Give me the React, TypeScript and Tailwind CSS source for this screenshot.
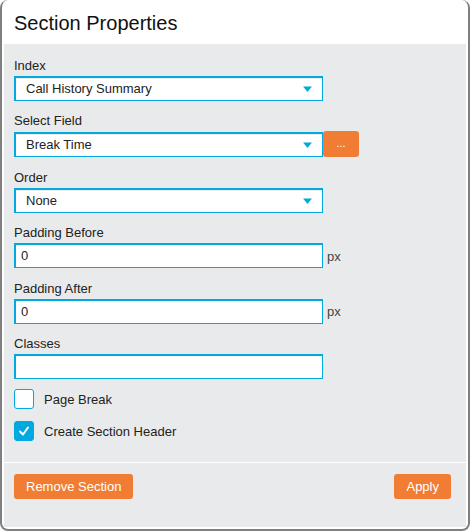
import React from 'react';

const font = { fontFamily: '"Liberation Sans", Arial, sans-serif' };

const Arrow = () => (
  <svg width="9" height="6" viewBox="0 0 9 6" className="absolute right-[10px] top-1/2 -translate-y-1/2">
    <path d="M0 0.5H9L4.5 6Z" fill="#00a9e0" />
  </svg>
);

const Field = ({ label, children }: { label: string; children: React.ReactNode }) => (
  <div className="flex flex-col">
    <div className="h-[20px] leading-[20px] text-[13px] text-[#222]">{label}</div>
    {children}
  </div>
);

const Select = ({ value }: { value: string }) => (
  <div className="relative w-[309px] h-[25px] bg-white border border-[#00a9e0] border-l-2 border-t-2 shadow-[inset_0_1px_1px_rgba(0,0,0,0.08)] flex items-center pl-[10px] text-[13px] text-[#222]">
    {value}
    <Arrow />
  </div>
);

const TextInput = ({ value, suffix }: { value: string; suffix?: boolean }) => (
  <div className="flex items-center gap-[4px]">
    <div className="w-[309px] h-[25px] bg-white border border-[#00a9e0] border-l-2 border-t-2 flex items-center pl-[5px] text-[13px] text-[#222]">
      {value}
    </div>
    {suffix && <span className="text-[13px] text-[#444] mt-[2px]">px</span>}
  </div>
);

const Checkbox = ({ checked, label }: { checked?: boolean; label: string }) => (
  <div className="flex items-center gap-[10px]">
    <div
      className={`w-[20px] h-[20px] rounded-[3px] border border-[#00a9e0] flex items-center justify-center ${
        checked ? 'bg-[#00a9e0]' : 'bg-white'
      }`}
    >
      {checked && (
        <svg width="12" height="12" viewBox="0 0 12 12">
          <path d="M2 6.5L5 9.5L10 2.5" stroke="white" strokeWidth="2" fill="none" strokeLinecap="round" strokeLinejoin="round" />
        </svg>
      )}
    </div>
    <span className="text-[13px] text-[#222]">{label}</span>
  </div>
);

export default function App() {
  return (
    <div style={font} className="w-[470px] h-[531px] bg-white border-2 border-t-0 border-[#7f7f7f] rounded-[8px] px-[2px] pb-[2px] flex flex-col overflow-hidden">
      {/* Header */}
      <div className="h-[44px] flex items-center pl-[10px] pt-[2px] text-[20px] text-[#111]">Section Properties</div>

      {/* Body */}
      <div className="flex-1 bg-[#e9eaec] flex flex-col">
        <div className="pt-[12px] pl-[10px] pb-[21px] flex flex-col gap-[10.4px]">
          <Field label="Index">
            <Select value="Call History Summary" />
          </Field>
          <Field label="Select Field">
            <div className="flex items-center">
              <Select value="Break Time" />
              <button className="w-[36px] h-[26px] bg-[#f07d33] rounded-[3px] text-white text-[11px] leading-none pb-[2px]">
                ...
              </button>
            </div>
          </Field>
          <Field label="Order">
            <Select value="None" />
          </Field>
          <Field label="Padding Before">
            <TextInput value="0" suffix />
          </Field>
          <Field label="Padding After">
            <TextInput value="0" suffix />
          </Field>
          <Field label="Classes">
            <TextInput value="" />
          </Field>
          <div className="flex flex-col gap-[12px]">
            <Checkbox label="Page Break" />
            <Checkbox label="Create Section Header" checked />
          </div>
        </div>

        {/* Footer */}
        <div className="border-t border-white flex justify-between items-start pt-[11px] pl-[10px] pr-[15px] flex-1">
          <button className="h-[25px] px-[12px] bg-[#f07d33] rounded-[3px] text-white text-[13px]">Remove Section</button>
          <button className="h-[25px] px-[12px] bg-[#f07d33] rounded-[3px] text-white text-[13px]">Apply</button>
        </div>
      </div>
    </div>
  );
}
